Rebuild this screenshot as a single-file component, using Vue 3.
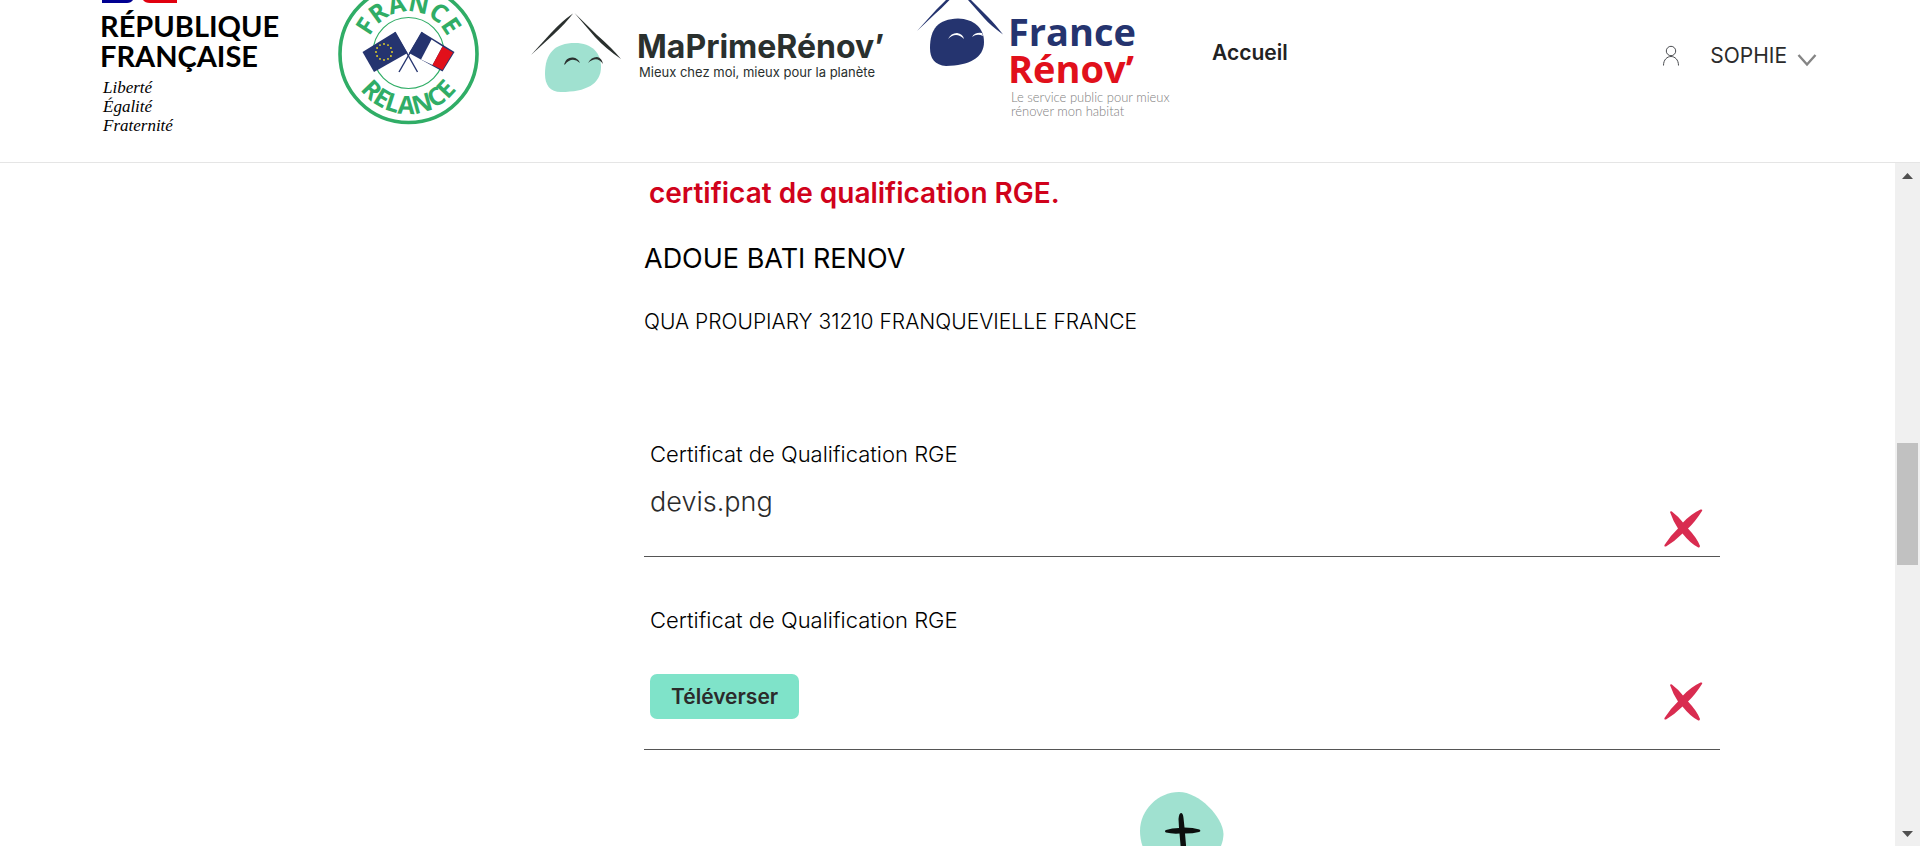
<script setup>
const company = { name: 'ADOUE BATI RENOV', address: 'QUA PROUPIARY 31210 FRANQUEVIELLE FRANCE' }
const stars = Array.from({ length: 12 }, (_, i) => {
  const a = (i * Math.PI) / 6
  return { x: 8 * Math.sin(a), y: 8 * Math.cos(a) }
})
</script>

<template>
  <div class="page">
    <header class="header">
      <svg class="logo" width="214" height="162" viewBox="100 0 214 162" role="img" aria-label="République Française">
        <path d="M102 0H133Q131 3 127 3H102Z" fill="#000091" />
        <path d="M143 0H177V3H150Q145 3 143 0Z" fill="#e1000f" />
        <g class="rf-name">
          <text x="100" y="37">RÉPUBLIQUE</text>
          <text x="100" y="67">FRANÇAISE</text>
        </g>
        <g class="rf-motto">
          <text x="103" y="93">Liberté</text>
          <text x="103" y="112">Égalité</text>
          <text x="103" y="131">Fraternité</text>
        </g>
      </svg>

      <svg class="logo" width="168" height="162" viewBox="338 0 168 162" role="img" aria-label="France Relance">
        <defs>
          <path id="arc-top" d="M366 54A42.500 42.500 0 0 1 451 54" />
          <path id="arc-bottom" d="M348.500 54A60 60 0 0 0 468.500 54" />
        </defs>
        <circle cx="408.500" cy="54" r="68.500" fill="#fff" stroke="#30ad66" stroke-width="3.600" />
        <circle cx="408.500" cy="53" r="35.500" fill="none" stroke="#30ad66" stroke-width="1.200" />
        <g class="relance">
          <text><textPath href="#arc-top" startOffset="50%">FRANCE</textPath></text>
          <text><textPath href="#arc-bottom" startOffset="50%">RELANCE</textPath></text>
        </g>
        <g stroke="#25346f" stroke-width="1.400" fill="none">
          <path d="M395 32L417.500 72" />
          <path d="M422 32L399 72" />
        </g>
        <path d="M362.500 52L395 32L407.500 53L374 72Z" fill="#25346f" />
        <g transform="translate(384 52)" fill="#f0dc22">
          <circle v-for="(s, i) in stars" :key="i" :cx="s.x" :cy="s.y" r="0.900" />
        </g>
        <path d="M422 32L454.500 52L442.500 71.500L409 53Z" fill="#25346f" />
        <path d="M431.500 39.500L442.500 46.500L432.500 65L421 59.500Z" fill="#fff" />
        <path d="M442.500 46.500L453 52.500L442.500 70L432.500 65Z" fill="#e1101b" />
      </svg>

      <svg class="logo" width="362" height="162" viewBox="530 0 362 162" role="img" aria-label="MaPrimeRénov’">
        <path d="M545 74C545 53 555 43 575 43C592 43 601 53 601 67C601 84 586 92 561 92C550 92 545 85 545 74Z" fill="#a0e1d0" />
        <g fill="#2a302e">
          <path d="M531 55L551 33Q562 21 573 13.500Q566 23 553 35Z" />
          <path d="M574.500 13L597 35Q612 48 621 59Q605 48 595 37Z" />
          <path d="M564 64.500Q566 57 573 57.500Q578 58 580 63Q572 56 565 64.500Z" />
          <path d="M588 63Q591 57 597 57Q602 58 603 64Q597 55 588 63Z" />
        </g>
        <text class="mpr-name" x="637" y="58">MaPrimeRénov’</text>
        <text class="mpr-tag" x="639" y="77">Mieux chez moi, mieux pour la planète</text>
      </svg>

      <svg class="logo" width="272" height="162" viewBox="916 0 272 162" role="img" aria-label="France Rénov’">
        <path d="M930 48C930 29 938 19 958 18.500C974 19 984 28 984 42C984 58 969 65.500 946 66C935 65 930 59 930 48Z" fill="#25346f" />
        <path d="M917 31L936 10Q942 4 946 0H949.500Q942 8 935 14Z" fill="#25346f" />
        <path d="M968 0H971L988 17Q995 24 1003 34.500Q990 25 984 18Z" fill="#25346f" />
        <path d="M948 39Q951 33 957 33Q963 34 964 39Q956 31 948 39Z" fill="#fff" />
        <path d="M972 37Q975 32 982 33L983 36Q977 33 972 37Z" fill="#fff" />
        <g class="fr-name">
          <text x="1008" y="46" fill="#25346f">France</text>
          <text x="1008" y="83" fill="#e1101b">Rénov’</text>
        </g>
        <g class="fr-tag">
          <text x="1011" y="102">Le service public pour mieux</text>
          <text x="1011" y="116">rénover mon habitat</text>
        </g>
      </svg>

      <nav class="nav"><a href="#accueil">Accueil</a></nav>

      <button class="account" type="button">
        <svg width="18" height="22" viewBox="0 0 18 22" fill="none" stroke="#4a4c50">
          <circle cx="9" cy="6" r="4.700" />
          <path d="M1.500 20.500C1.500 8.500 16.500 8.500 16.500 20.500" />
        </svg>
        <span>SOPHIE</span>
        <svg class="chevron" width="20" height="13" viewBox="0 0 20 13" fill="none" stroke="#858585" stroke-width="2.400">
          <path d="M1.500 1L10 10.500L18.500 1" />
        </svg>
      </button>
    </header>

    <div class="body">
      <main class="content">
        <p class="notice">certificat de qualification RGE.</p>
        <h2 class="company">{{ company.name }}</h2>
        <p class="address">{{ company.address }}</p>

        <section class="field">
          <h3 class="label">Certificat de Qualification RGE</h3>
          <div class="row filled">
            <span class="file">devis.png</span>
            <button class="remove" type="button" aria-label="Supprimer devis.png">
              <svg width="39" height="39" viewBox="0 0 39 39" fill="#d92c50">
                <path d="M6 3Q7 1.500 9 3.500Q15 8 19 13.500Q27 5 36.500 .500Q39 0 38 2Q31 13 24 19.500Q33 29 36 37Q35.500 39.500 33.500 38Q26 34 18.500 24.500Q11 32 2 37.500Q0 38 .500 36Q6 27 14 19.500Q9 12 6 3Z" />
              </svg>
            </button>
          </div>
        </section>

        <section class="field">
          <h3 class="label">Certificat de Qualification RGE</h3>
          <div class="row empty">
            <button class="upload" type="button">Téléverser</button>
            <button class="remove" type="button" aria-label="Supprimer le certificat">
              <svg width="39" height="39" viewBox="0 0 39 39" fill="#d92c50">
                <path d="M6 3Q7 1.500 9 3.500Q15 8 19 13.500Q27 5 36.500 .500Q39 0 38 2Q31 13 24 19.500Q33 29 36 37Q35.500 39.500 33.500 38Q26 34 18.500 24.500Q11 32 2 37.500Q0 38 .500 36Q6 27 14 19.500Q9 12 6 3Z" />
              </svg>
            </button>
          </div>
        </section>

        <button class="add" type="button" aria-label="Ajouter un certificat">
          <svg width="84" height="80" viewBox="0 0 84 80">
            <path d="M0 39C0 18 18 0 39 0C59 0 83 25 83.500 42C83 62 65 79 40 79C17 79 0 63 0 39Z" fill="#a0e1d0" />
            <path d="M41 21Q43 21 43.500 26L44.500 35.500Q53 35.500 59.500 37.500Q61.500 39 59 40Q53 41.500 45 41.500L46 53Q46 60 44 61Q41 60 40.500 53L39.500 41.500Q32 42 26 40.500Q24 39 26 38Q32 36 39 36L38.500 27Q39 21 41 21Z" fill="#0c0f0e" />
          </svg>
        </button>
      </main>

      <div class="scrollbar" aria-hidden="true">
        <svg width="11" height="6" viewBox="0 0 11 6"><path d="M0 6L5.500 0L11 6Z" fill="#505050" /></svg>
        <div class="track"><div class="thumb"></div></div>
        <svg width="11" height="6" viewBox="0 0 11 6"><path d="M0 0H11L5.500 6Z" fill="#505050" /></svg>
      </div>
    </div>
  </div>
</template>

<style>
body { margin: 0; }
</style>

<style scoped>
.page {
  height: 100vh;
  display: flex;
  flex-direction: column;
  overflow: hidden;
  background: #fff;
  color: #000;
  font-family: Inter, "Noto Sans", sans-serif;
}
.header {
  display: flex;
  flex: none;
  align-items: flex-start;
  gap: 24px;
  padding: 0 103px 0 100px;
  border-bottom: 1px solid #e5e5e5;
}
.logo { display: block; flex: none; }
.rf-name { font: 700 29px Lato, sans-serif; }
.rf-motto { font: italic 17px "Liberation Serif", serif; }
.relance { font: 700 25px "Open Sans", sans-serif; fill: #30ad66; text-anchor: middle; }
.mpr-name { font: 700 32px Inter, sans-serif; fill: #2a302e; }
.mpr-tag { font: 400 13px Inter, sans-serif; fill: #2a302e; }
.fr-name { font: 700 38px "Open Sans", sans-serif; }
.fr-tag { font: 300 13px Lato, sans-serif; fill: #808080; }
.nav { flex: 1; padding-top: 38px; }
.nav a {
  color: #222;
  font-size: 21px;
  font-weight: 600;
  line-height: 30px;
  text-decoration: none;
}
button {
  border: 0;
  padding: 0;
  background: none;
  font-family: inherit;
  color: #2b2b2b;
  cursor: pointer;
}
.account {
  display: flex;
  align-items: center;
  margin-top: 41px;
  font-size: 21px;
  line-height: 30px;
}
.account span { margin: 0 10px 0 30px; }
.chevron { margin-top: 8px; }
.body { flex: 1; min-height: 0; display: flex; }
.content {
  flex: 1;
  min-width: 0;
  box-sizing: border-box;
  padding: 12px 175px 0 644px;
  overflow: hidden;
}
.notice {
  margin: 0 0 30px;
  padding-left: 5px;
  color: #d0021b;
  font-size: 28px;
  font-weight: 600;
  line-height: 36px;
}
.company { margin: 0 0 30px; font-size: 27px; font-weight: 400; line-height: 36px; }
.address { margin: 0 0 102px; font-size: 21px; font-weight: 300; line-height: 30px; }
.field { margin-bottom: 48px; padding-left: 6px; border-bottom: 1px solid #555; }
.field:last-of-type { margin-bottom: 42px; }
.label { margin: 0; font-size: 22px; font-weight: 300; line-height: 30px; }
.row { display: flex; justify-content: space-between; padding-right: 17px; }
.filled { height: 64px; margin-top: 15px; padding-bottom: 8px; }
.empty { height: 47px; margin-top: 39px; padding-bottom: 28px; }
.file { color: #2b2b2b; font-size: 27px; font-weight: 300; line-height: 36px; }
.remove { align-self: flex-end; }
.remove svg { display: block; }
.upload {
  align-self: flex-start;
  padding: 0 21px;
  border-radius: 7px;
  background: #7fe3c9;
  font-size: 21px;
  font-weight: 600;
  line-height: 45px;
}
.add { display: block; margin: 0 auto; }
.scrollbar {
  flex: none;
  width: 25px;
  box-sizing: border-box;
  display: flex;
  flex-direction: column;
  align-items: center;
  gap: 9px;
  padding: 10px 2px 9px;
  background: #f0f0f0;
}
.track { flex: 1; width: 100%; display: flex; flex-direction: column; }
.track::before { content: ""; flex: 255; }
.track::after { content: ""; flex: 257; }
.thumb { flex: 122; background: #c1c1c1; }
</style>
